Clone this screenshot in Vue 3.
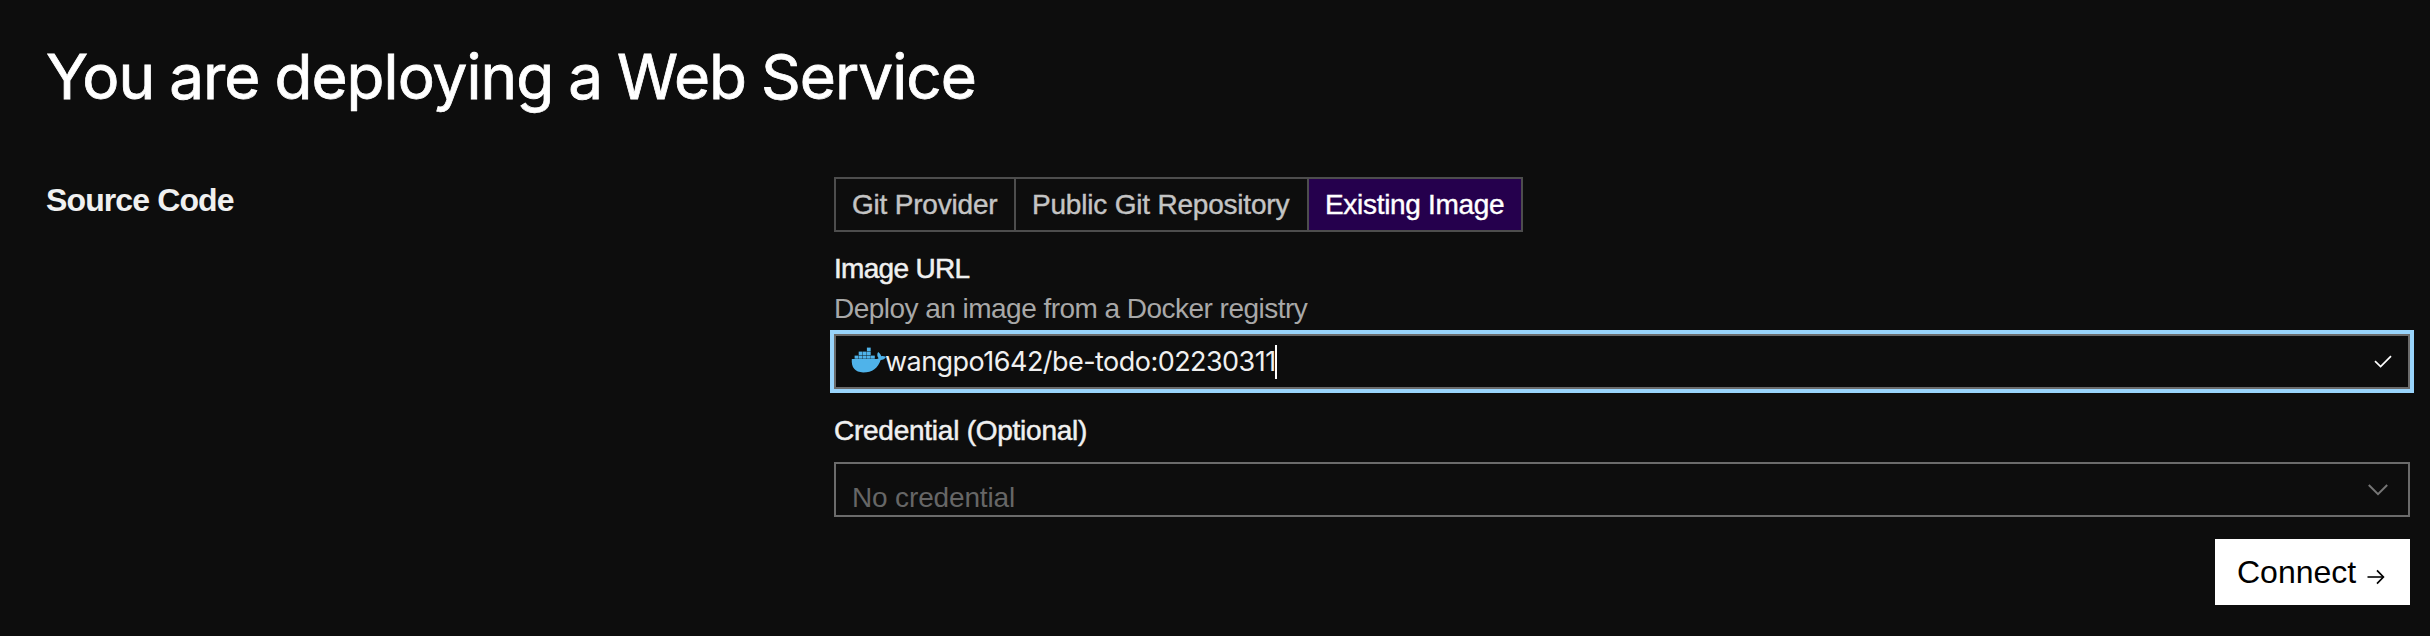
<script setup>
import { ref } from 'vue'

const tabs = [
  { label: 'Git Provider', key: 'git' },
  { label: 'Public Git Repository', key: 'public' },
  { label: 'Existing Image', key: 'image' },
]
const active = ref('image')
const imageUrl = ref('wangpo1642/be-todo:02230311')
</script>

<template>
  <main class="page">
    <h1 class="title">You are deploying a Web Service</h1>
    <div class="columns">
      <h2 class="section">Source Code</h2>
      <div class="form">
        <div class="tabs">
          <button
            v-for="t in tabs"
            :key="t.key"
            class="tab"
            :class="[t.key, { active: t.key === active }]"
            @click="active = t.key"
          >{{ t.label }}</button>
        </div>

        <div class="label url-label">Image URL</div>
        <div class="hint">Deploy an image from a Docker registry</div>
        <div class="input">
          <svg class="docker" width="36" height="27" viewBox="0 0 36 27">
            <g fill="#4fb3ea">
              <rect x="15.9" y="0.6" width="3.8" height="3.6" />
              <rect x="7.7" y="4.6" width="3.8" height="3.6" />
              <rect x="11.8" y="4.6" width="3.8" height="3.6" />
              <rect x="15.9" y="4.6" width="3.8" height="3.6" />
              <rect x="3.6" y="8.6" width="3.8" height="3.1" />
              <rect x="7.7" y="8.6" width="3.8" height="3.1" />
              <rect x="11.8" y="8.6" width="3.8" height="3.1" />
              <rect x="15.9" y="8.6" width="3.8" height="3.1" />
              <rect x="20" y="8.6" width="3.8" height="3.1" />
              <path d="M0.8 12.1H24.2C25.6 12.1 26.8 11.8 27.6 11.2C26 9.2 25.9 6.9 27.1 4.9C28.9 6.2 29.9 7.7 30.2 9.2C31.8 8.9 33.6 9.2 35 10C33.8 12 32 12.8 29.7 12.9C27 20.8 21.4 25.4 12.2 25.4C4 25.4 0.2 20.6 0.8 12.1Z" />
            </g>
          </svg>
          <span class="value">{{ imageUrl }}</span>
          <span class="caret"></span>
          <svg class="check" width="20" height="16" viewBox="0 0 20 16">
            <path d="M2 7.2L7.6 12.5L18 2.2" fill="none" stroke="#fff" stroke-width="1.7" />
          </svg>
        </div>

        <div class="label cred-label">Credential (Optional)</div>
        <div class="select">
          <span class="placeholder">No credential</span>
          <svg class="chevron" width="22" height="14" viewBox="0 0 22 14">
            <path d="M1.8 2L11 11.2L20.2 2" fill="none" stroke="#757575" stroke-width="2" />
          </svg>
        </div>

        <button class="connect">
          <span>Connect</span>
          <svg class="arrow" width="18" height="16" viewBox="0 0 18 16">
            <path d="M0.5 8H16" fill="none" stroke="#222" stroke-width="1.8" />
            <path d="M10 1.4L16.4 8L10 14.6" fill="none" stroke="#000" stroke-width="1.7" />
          </svg>
        </button>
      </div>
    </div>
  </main>
</template>

<style>
body {
  background: #0d0d0d;
}
</style>

<style scoped>
.page {
  box-sizing: border-box;
  width: 2430px;
  height: 636px;
  padding: 41px 20px 0 46px;
  overflow: hidden;
  background: #0d0d0d;
  color: #f0f0f0;
  font: 28px/40px "Liberation Sans", Arial, sans-serif;
}
.title {
  margin: 0;
  color: #fff;
  font: 400 62px/72px Inter, sans-serif;
  letter-spacing: -0.98px;
  word-spacing: -1.5px;
  -webkit-text-stroke: 0.8px currentColor;
}
.columns {
  display: grid;
  grid-template-columns: 788px 1576px;
  margin-top: 64px;
}
.section {
  margin: 3px 0 0;
  font-size: 32px;
  font-weight: 700;
  line-height: 40px;
  letter-spacing: -0.88px;
}
.form {
  display: flex;
  flex-direction: column;
}
.tabs {
  display: flex;
  align-self: flex-start;
  border: 2px solid #4d4d4d;
}
.tab {
  box-sizing: border-box;
  height: 51px;
  margin: 0;
  padding: 1px 0 0 16px;
  border: 0;
  border-left: 2px solid #4d4d4d;
  background: transparent;
  color: #c4c4c4;
  font: inherit;
  line-height: 50px;
  text-align: left;
  white-space: nowrap;
  letter-spacing: -0.2px;
  -webkit-text-stroke: 0.4px currentColor;
}
.tab.git {
  width: 178px;
  border-left: 0;
}
.tab.public {
  width: 293px;
}
.tab.image {
  width: 214px;
  letter-spacing: -0.31px;
}
.tab.active {
  background: #25004d;
  color: #fff;
}
.label {
  -webkit-text-stroke: 0.5px currentColor;
}
.url-label {
  margin-top: 17px;
  letter-spacing: -0.7px;
}
.hint {
  color: #a8a8a8;
  letter-spacing: -0.53px;
}
.input,
.select {
  box-sizing: border-box;
  display: flex;
  align-items: center;
  height: 55px;
  border: 2px solid #6b6b6b;
}
.input {
  margin-top: 5px;
  padding: 0 15px;
  outline: 4px solid #99d4fb;
}
.docker {
  margin-top: -2px;
}
.value {
  margin: 1px 0 0 -2px;
  font: 400 27px/40px Inter, sans-serif;
  letter-spacing: -0.54px;
}
.caret {
  width: 2px;
  height: 34px;
  margin-left: -1px;
  background: #fff;
}
.check {
  margin-left: auto;
}
.cred-label {
  margin-top: 22px;
  letter-spacing: -0.25px;
}
.select {
  margin-top: 11px;
  padding: 0 19px 0 16px;
}
.placeholder {
  margin-top: 17px;
  color: #666;
  letter-spacing: -0.15px;
}
.chevron {
  margin-left: auto;
}
.connect {
  display: flex;
  align-items: center;
  align-self: flex-end;
  box-sizing: border-box;
  width: 195px;
  height: 66px;
  margin: 22px 0 0;
  padding: 0 0 0 22px;
  border: 0;
  background: #fff;
  color: #000;
  font: 32px/64px "Liberation Sans", Arial, sans-serif;
}
.arrow {
  margin: 10px 0 0 11px;
}
</style>
